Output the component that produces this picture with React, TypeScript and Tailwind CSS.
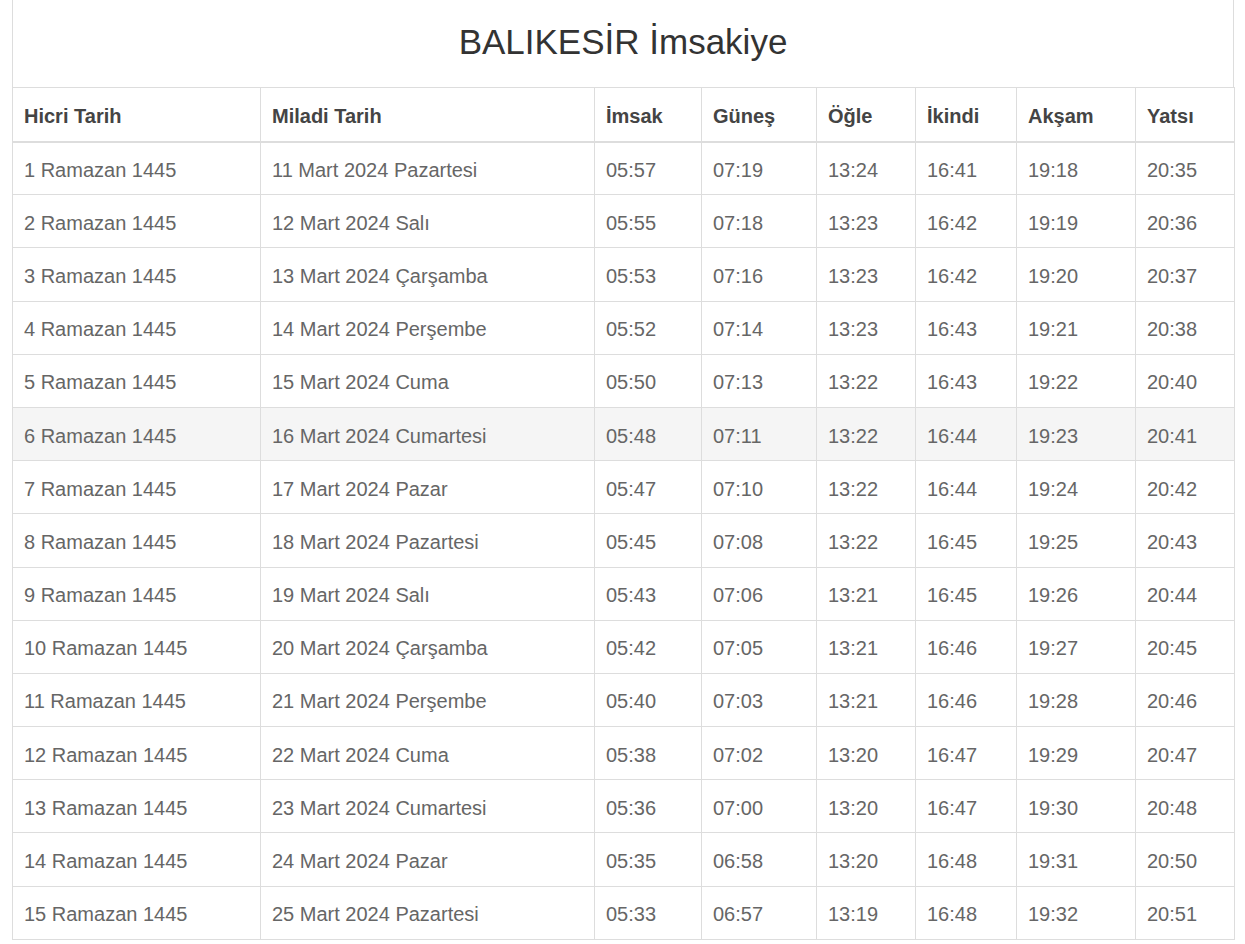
import React from "react";

const rows: string[][] = [
  ["1 Ramazan 1445", "11 Mart 2024 Pazartesi", "05:57", "07:19", "13:24", "16:41", "19:18", "20:35"],
  ["2 Ramazan 1445", "12 Mart 2024 Salı", "05:55", "07:18", "13:23", "16:42", "19:19", "20:36"],
  ["3 Ramazan 1445", "13 Mart 2024 Çarşamba", "05:53", "07:16", "13:23", "16:42", "19:20", "20:37"],
  ["4 Ramazan 1445", "14 Mart 2024 Perşembe", "05:52", "07:14", "13:23", "16:43", "19:21", "20:38"],
  ["5 Ramazan 1445", "15 Mart 2024 Cuma", "05:50", "07:13", "13:22", "16:43", "19:22", "20:40"],
  ["6 Ramazan 1445", "16 Mart 2024 Cumartesi", "05:48", "07:11", "13:22", "16:44", "19:23", "20:41"],
  ["7 Ramazan 1445", "17 Mart 2024 Pazar", "05:47", "07:10", "13:22", "16:44", "19:24", "20:42"],
  ["8 Ramazan 1445", "18 Mart 2024 Pazartesi", "05:45", "07:08", "13:22", "16:45", "19:25", "20:43"],
  ["9 Ramazan 1445", "19 Mart 2024 Salı", "05:43", "07:06", "13:21", "16:45", "19:26", "20:44"],
  ["10 Ramazan 1445", "20 Mart 2024 Çarşamba", "05:42", "07:05", "13:21", "16:46", "19:27", "20:45"],
  ["11 Ramazan 1445", "21 Mart 2024 Perşembe", "05:40", "07:03", "13:21", "16:46", "19:28", "20:46"],
  ["12 Ramazan 1445", "22 Mart 2024 Cuma", "05:38", "07:02", "13:20", "16:47", "19:29", "20:47"],
  ["13 Ramazan 1445", "23 Mart 2024 Cumartesi", "05:36", "07:00", "13:20", "16:47", "19:30", "20:48"],
  ["14 Ramazan 1445", "24 Mart 2024 Pazar", "05:35", "06:58", "13:20", "16:48", "19:31", "20:50"],
  ["15 Ramazan 1445", "25 Mart 2024 Pazartesi", "05:33", "06:57", "13:19", "16:48", "19:32", "20:51"],
];

const headers = ["Hicri Tarih", "Miladi Tarih", "İmsak", "Güneş", "Öğle", "İkindi", "Akşam", "Yatsı"];

export default function App() {
  return (
    <div className="min-h-screen bg-white pl-[12px] pr-[11px] font-['Liberation_Sans',Arial,sans-serif]">
      {/* title panel */}
      <div className="h-[87px] border-x border-[#ddd] flex items-center justify-center pb-[4px]">
        <h1 className="text-[35px] text-[#333] font-normal leading-none">BALIKESİR İmsakiye</h1>
      </div>

      <table className="w-[1222px] table-fixed border-collapse border border-[#ddd] text-[20px] leading-[28px]">
        <colgroup>
          <col className="w-[248px]" />
          <col className="w-[334px]" />
          <col className="w-[107px]" />
          <col className="w-[115px]" />
          <col className="w-[99px]" />
          <col className="w-[101px]" />
          <col className="w-[119px]" />
          <col className="w-[99px]" />
        </colgroup>
        <thead>
          <tr className="h-[54px]">
            {headers.map((h) => (
              <th
                key={h}
                className="border border-[#ddd] border-b-2 px-[11px] pt-[3px] text-left font-bold text-[#444] align-middle"
              >
                {h}
              </th>
            ))}
          </tr>
        </thead>
        <tbody>
          {rows.map((r, i) => (
            <tr key={r[0]} className={i === 5 ? "h-[53.2px] bg-[#f5f5f5]" : "h-[53.2px]"}>
              {r.map((c, j) => (
                <td
                  key={j}
                  className="border border-[#ddd] px-[11px] pt-[3px] text-[#666] align-middle whitespace-nowrap"
                >
                  {c}
                </td>
              ))}
            </tr>
          ))}
        </tbody>
      </table>
    </div>
  );
}
